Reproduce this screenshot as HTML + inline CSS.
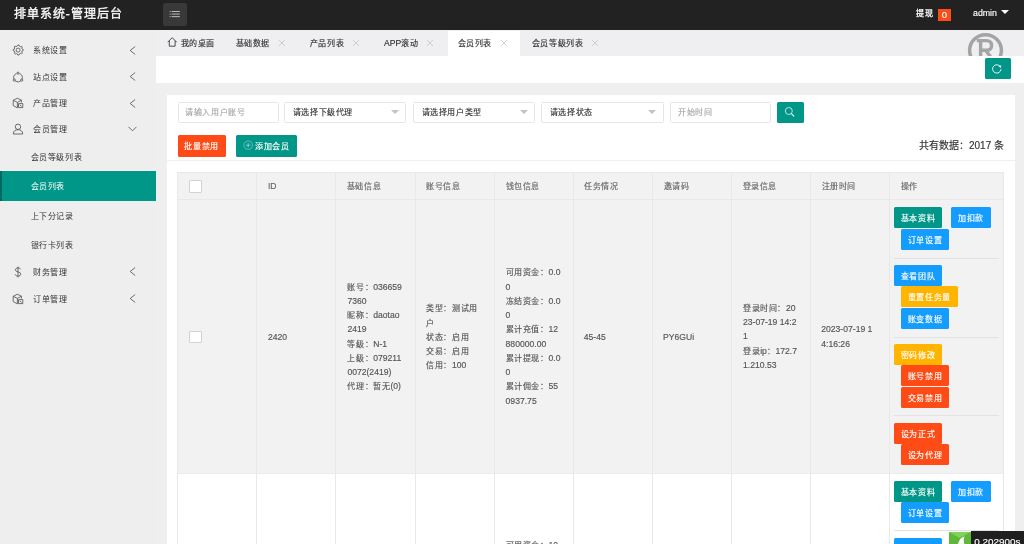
<!DOCTYPE html>
<html lang="zh-CN"><head><meta charset="utf-8"><style>
*{box-sizing:border-box;margin:0;padding:0}
html,body{width:1024px;height:544px;overflow:hidden}
body{position:relative;background:#efefef;font-family:"Liberation Sans",sans-serif;font-size:9px;color:#666}
.t,.bt{-webkit-text-stroke-width:0.15px}
#wrap{position:absolute;left:0;top:0;width:1024px;height:544px;will-change:transform}
.a{position:absolute}
.t{position:absolute;white-space:nowrap;line-height:12px}
</style></head><body><div id="wrap">
<div class="a" style="left:0px;top:0px;width:1024.00px;height:30.00px;background:#222"></div>
<div class="t" style="left:13.6px;top:8.2px;color:#fff;-webkit-text-stroke-width:0.3px"><span style="font-size:12px;letter-spacing:0.98px">排单系统</span><span style="font-size:12.9px;letter-spacing:0.98px">-</span><span style="font-size:12px;letter-spacing:0.98px">管理后台</span></div>
<div class="a" style="left:163px;top:3px;width:23.50px;height:22.50px;background:#393939;border-radius:2.5px"></div>
<svg class="a" style="left:163px;top:3px" width="23.5" height="22.5" viewBox="0 0 23.5 22.5">
<g fill="#c8c8c8"><rect x="6.7" y="8" width="1" height="0.9"/><rect x="8.6" y="8" width="8.2" height="0.9"/>
<rect x="6.7" y="10.6" width="1" height="0.9"/><rect x="8.6" y="10.6" width="8.2" height="0.9"/>
<rect x="6.7" y="13.2" width="1" height="0.9"/><rect x="8.6" y="13.2" width="8.2" height="0.9"/></g></svg>
<div class="t" style="left:916px;top:7.20px;color:#fff;-webkit-text-stroke-width:0.25px"><span style="font-size:8.00px;letter-spacing:0.60px">提现</span></div>
<div class="a" style="left:938px;top:8.5px;width:13.00px;height:12.30px;background:#ff4c16"></div>
<div class="t" style="left:938px;top:9.00px;color:#fff;font-size:9.6px;letter-spacing:0px;width:13px;text-align:center">0</div>
<div class="t" style="left:973px;top:7.30px;color:#fff;font-size:8.8px;letter-spacing:0px;">admin</div>
<div class="a" style="left:1001px;top:10.3px;width:0;height:0;border-left:4.2px solid transparent;border-right:4.2px solid transparent;border-top:4px solid #fff"></div>
<div class="a" style="left:0px;top:30px;width:156.00px;height:514.00px;background:#eee"></div>
<div class="a" style="left:0px;top:171.25px;width:156.00px;height:29.75px;background:#009688;border-left:2.7px solid #00695f"></div>
<svg class="a" style="left:12px;top:44.3px" width="12" height="12" viewBox="0 0 12 12" fill="none" stroke="#555" stroke-width="0.85"><path d="M6 0.9 L7 1.1 L7.4 2.2 L8.5 2.7 L9.6 2.2 L10.3 3 L9.8 4.1 L10.2 5.2 L11.2 5.6 L11.2 6.6 L10.2 7 L9.8 8.1 L10.3 9.1 L9.5 9.9 L8.5 9.4 L7.4 9.9 L7 11 L5.9 11.1 L5.4 10 L4.3 9.6 L3.2 10.1 L2.4 9.3 L2.9 8.2 L2.4 7.1 L1.2 6.7 L1.1 5.6 L2.3 5.1 L2.7 4 L2.2 2.9 L3 2.1 L4.1 2.6 L5.2 2.1 Z"/><circle cx="6.1" cy="6.1" r="2"/></svg>
<div class="t" style="left:33px;top:44.40px;color:#333;-webkit-text-stroke-width:0"><span style="font-size:8.00px;letter-spacing:0.60px">系统设置</span></div>
<svg class="a" style="left:129px;top:45.8px" width="7" height="9" viewBox="0 0 7 9"><path d="M6.2 0.5 L1.2 4.5 L6.2 8.5" fill="none" stroke="#555" stroke-width="0.85"/></svg>
<svg class="a" style="left:12px;top:70.7px" width="12" height="12" viewBox="0 0 12 12" fill="none" stroke="#555" stroke-width="0.85"><path d="M4.3 2.6 A4.3 4.3 0 0 0 1.9 8.2"/><path d="M7.7 2.6 A4.3 4.3 0 0 1 10.1 8.2"/><path d="M3.2 9.9 A4.3 4.3 0 0 0 8.8 9.9"/><circle cx="6" cy="2.2" r="1.1"/><circle cx="2.3" cy="9.1" r="1.1"/><circle cx="9.7" cy="9.1" r="1.1"/></svg>
<div class="t" style="left:33px;top:70.80px;color:#333;-webkit-text-stroke-width:0"><span style="font-size:8.00px;letter-spacing:0.60px">站点设置</span></div>
<svg class="a" style="left:129px;top:72.2px" width="7" height="9" viewBox="0 0 7 9"><path d="M6.2 0.5 L1.2 4.5 L6.2 8.5" fill="none" stroke="#555" stroke-width="0.85"/></svg>
<svg class="a" style="left:12px;top:97px" width="12" height="12" viewBox="0 0 12 12" fill="none" stroke="#555" stroke-width="0.85"><path d="M1.2 3.3 L5.4 1.2 L9.4 3.2 L9.4 5.5 M1.2 3.3 L1.2 8.6 L5.4 10.8 L5.4 5.4 L1.2 3.3 M5.4 5.4 L9.4 3.2"/><path d="M6.5 6.6 L10.8 6.6 L10.8 10.6 L6.5 10.6 Z M7.7 7.8 L9.6 9.4"/></svg>
<div class="t" style="left:33px;top:97.10px;color:#333;-webkit-text-stroke-width:0"><span style="font-size:8.00px;letter-spacing:0.60px">产品管理</span></div>
<svg class="a" style="left:129px;top:98.5px" width="7" height="9" viewBox="0 0 7 9"><path d="M6.2 0.5 L1.2 4.5 L6.2 8.5" fill="none" stroke="#555" stroke-width="0.85"/></svg>
<svg class="a" style="left:12px;top:123.30000000000001px" width="12" height="12" viewBox="0 0 12 12" fill="none" stroke="#555" stroke-width="0.85"><circle cx="6" cy="3.8" r="2.7"/><path d="M1.3 11 C1.3 7.8 3.5 6.7 6 6.7 C8.5 6.7 10.7 7.8 10.7 11 Z"/></svg>
<div class="t" style="left:33px;top:123.40px;color:#333;-webkit-text-stroke-width:0"><span style="font-size:8.00px;letter-spacing:0.60px">会员管理</span></div>
<svg class="a" style="left:128px;top:126.30000000000001px" width="9" height="6" viewBox="0 0 9 6"><path d="M0.5 0.8 L4.5 4.8 L8.5 0.8" fill="none" stroke="#555" stroke-width="0.85"/></svg>
<svg class="a" style="left:12px;top:265.9px" width="12" height="12" viewBox="0 0 12 12" fill="none" stroke="#555" stroke-width="0.85"><path d="M8.6 3.3 C8.2 2.3 7.2 1.9 6 1.9 C4.5 1.9 3.4 2.7 3.4 3.9 C3.4 6.5 8.8 5.4 8.8 8.1 C8.8 9.4 7.6 10.1 6 10.1 C4.6 10.1 3.5 9.5 3.1 8.4 M6 0.6 L6 11.4"/></svg>
<div class="t" style="left:33px;top:266.00px;color:#333;-webkit-text-stroke-width:0"><span style="font-size:8.00px;letter-spacing:0.60px">财务管理</span></div>
<svg class="a" style="left:129px;top:267.4px" width="7" height="9" viewBox="0 0 7 9"><path d="M6.2 0.5 L1.2 4.5 L6.2 8.5" fill="none" stroke="#555" stroke-width="0.85"/></svg>
<svg class="a" style="left:12px;top:292.75px" width="12" height="12" viewBox="0 0 12 12" fill="none" stroke="#555" stroke-width="0.85"><path d="M1.2 3.3 L5.4 1.2 L9.4 3.2 L9.4 5.5 M1.2 3.3 L1.2 8.6 L5.4 10.8 L5.4 5.4 L1.2 3.3 M5.4 5.4 L9.4 3.2"/><path d="M6.5 6.6 L10.8 6.6 L10.8 10.6 L6.5 10.6 Z M7.7 7.8 L9.6 9.4"/></svg>
<div class="t" style="left:33px;top:292.85px;color:#333;-webkit-text-stroke-width:0"><span style="font-size:8.00px;letter-spacing:0.60px">订单管理</span></div>
<svg class="a" style="left:129px;top:294.25px" width="7" height="9" viewBox="0 0 7 9"><path d="M6.2 0.5 L1.2 4.5 L6.2 8.5" fill="none" stroke="#555" stroke-width="0.85"/></svg>
<div class="t" style="left:30.7px;top:151.30px;color:#333;-webkit-text-stroke-width:0"><span style="font-size:8.00px;letter-spacing:0.60px">会员等级列表</span></div>
<div class="t" style="left:30.7px;top:180.35px;color:#fff;-webkit-text-stroke-width:0"><span style="font-size:8.00px;letter-spacing:0.60px">会员列表</span></div>
<div class="t" style="left:30.7px;top:209.70px;color:#333;-webkit-text-stroke-width:0"><span style="font-size:8.00px;letter-spacing:0.60px">上下分记录</span></div>
<div class="t" style="left:30.7px;top:238.80px;color:#333;-webkit-text-stroke-width:0"><span style="font-size:8.00px;letter-spacing:0.60px">银行卡列表</span></div>
<div class="a" style="left:156px;top:30px;width:868.00px;height:26.00px;background:#efeef0"></div>
<div class="a" style="left:447.7px;top:31px;width:72.10px;height:25.00px;background:#fff"></div>
<svg class="a" style="left:966px;top:31px" width="40" height="40" viewBox="0 0 40 40">
<circle cx="19.5" cy="19.6" r="15.9" fill="none" stroke="#a4a4a4" stroke-width="3.5"/>
<g fill="none" stroke="#a4a4a4" stroke-width="3.4"><path d="M14.6 8.6 L14.6 32"/><path d="M10.8 9.6 L20.2 9.6 C24 9.6 25.6 11.8 25.6 14.4 C25.6 17.1 24 19.3 20.2 19.3 L14.6 19.3"/><path d="M19.6 19.3 L26.2 28"/></g></svg>
<svg class="a" style="left:166.5px;top:37px" width="11" height="10" viewBox="0 0 11 10"><path d="M0.7 5.2 L5.2 0.7 L9.7 5.2 M2.3 3.8 L2.3 9.2 L8.1 9.2 L8.1 3.8" fill="none" stroke="#333" stroke-width="0.85"/></svg>
<div class="t" style="left:180.6px;top:36.50px;color:#333;"><span style="font-size:8.00px;letter-spacing:0.60px">我的桌面</span></div>
<div class="t" style="left:235.5px;top:36.50px;color:#333;"><span style="font-size:8.00px;letter-spacing:0.60px">基础数据</span></div>
<svg class="a" style="left:278.1px;top:38.5px" width="8" height="8" viewBox="0 0 8 8"><path d="M0.9 0.9 L7 7 M7 0.9 L0.9 7" stroke="#c4c4c4" stroke-width="0.8"/></svg>
<div class="t" style="left:309.9px;top:36.50px;color:#333;"><span style="font-size:8.00px;letter-spacing:0.60px">产品列表</span></div>
<svg class="a" style="left:352.3px;top:38.5px" width="8" height="8" viewBox="0 0 8 8"><path d="M0.9 0.9 L7 7 M7 0.9 L0.9 7" stroke="#c4c4c4" stroke-width="0.8"/></svg>
<div class="t" style="left:384px;top:36.50px;color:#333;"><span style="font-size:8.60px">APP</span><span style="font-size:8.00px;letter-spacing:0.60px">滚动</span></div>
<svg class="a" style="left:425.9px;top:38.5px" width="8" height="8" viewBox="0 0 8 8"><path d="M0.9 0.9 L7 7 M7 0.9 L0.9 7" stroke="#c4c4c4" stroke-width="0.8"/></svg>
<div class="t" style="left:457.6px;top:36.50px;color:#333;"><span style="font-size:8.00px;letter-spacing:0.60px">会员列表</span></div>
<svg class="a" style="left:499.8px;top:38.5px" width="8" height="8" viewBox="0 0 8 8"><path d="M0.9 0.9 L7 7 M7 0.9 L0.9 7" stroke="#c4c4c4" stroke-width="0.8"/></svg>
<div class="t" style="left:531.8px;top:36.50px;color:#333;"><span style="font-size:8.00px;letter-spacing:0.60px">会员等级列表</span></div>
<svg class="a" style="left:591.2px;top:38.5px" width="8" height="8" viewBox="0 0 8 8"><path d="M0.9 0.9 L7 7 M7 0.9 L0.9 7" stroke="#c4c4c4" stroke-width="0.8"/></svg>
<div class="a" style="left:156px;top:55.5px;width:868.00px;height:27.50px;background:#fff"></div>
<div class="a" style="left:985px;top:58px;width:26.00px;height:20.70px;background:#009688;border-radius:1.5px"></div>
<svg class="a" style="left:991px;top:62.5px" width="12" height="12" viewBox="0 0 12 12"><path d="M9.6 4.1 A4.2 4.2 0 1 0 10 6.2" fill="none" stroke="#fff" stroke-width="0.9"/><path d="M7.6 3.3 L10.2 2.3 L10 5.1 Z" fill="#fff"/></svg>
<div class="a" style="left:167px;top:95px;width:848.00px;height:449.00px;background:#fff"></div>
<div class="a" style="left:177.5px;top:102.4px;width:101.00px;height:20.20px;border:0.75px solid #e6e6e6;border-radius:1.5px;background:#fff"></div>
<div class="t" style="left:185.2px;top:106.00px;color:#a8a8a8;"><span style="font-size:8.00px;letter-spacing:0.60px">请输入用户账号</span></div>
<div class="a" style="left:284.3px;top:102.4px;width:122.20px;height:20.20px;border:0.75px solid #e6e6e6;border-radius:1.5px;background:#fff"></div>
<div class="t" style="left:292.8px;top:106.20px;color:#333;"><span style="font-size:8.00px;letter-spacing:0.60px">请选择下级代理</span></div>
<div class="a" style="left:391.20px;top:110.3px;width:0;height:0;border-left:4.2px solid transparent;border-right:4.2px solid transparent;border-top:4px solid #c2c2c2"></div>
<div class="a" style="left:413.2px;top:102.4px;width:122.10px;height:20.20px;border:0.75px solid #e6e6e6;border-radius:1.5px;background:#fff"></div>
<div class="t" style="left:421.7px;top:106.20px;color:#333;"><span style="font-size:8.00px;letter-spacing:0.60px">请选择用户类型</span></div>
<div class="a" style="left:520.00px;top:110.3px;width:0;height:0;border-left:4.2px solid transparent;border-right:4.2px solid transparent;border-top:4px solid #c2c2c2"></div>
<div class="a" style="left:541.4px;top:102.4px;width:122.30px;height:20.20px;border:0.75px solid #e6e6e6;border-radius:1.5px;background:#fff"></div>
<div class="t" style="left:549.9px;top:106.20px;color:#333;"><span style="font-size:8.00px;letter-spacing:0.60px">请选择状态</span></div>
<div class="a" style="left:648.40px;top:110.3px;width:0;height:0;border-left:4.2px solid transparent;border-right:4.2px solid transparent;border-top:4px solid #c2c2c2"></div>
<div class="a" style="left:670.2px;top:102.4px;width:100.80px;height:20.20px;border:0.75px solid #e6e6e6;border-radius:1.5px;background:#fff"></div>
<div class="t" style="left:678.3px;top:106.00px;color:#a8a8a8;"><span style="font-size:8.00px;letter-spacing:0.60px">开始时间</span></div>
<div class="a" style="left:777.3px;top:102px;width:26.50px;height:21.10px;background:#009688;border-radius:1.5px"></div>
<svg class="a" style="left:784px;top:106px" width="12" height="12" viewBox="0 0 12 12"><circle cx="4.8" cy="5" r="3.5" fill="none" stroke="rgba(255,255,255,0.85)" stroke-width="0.85"/><path d="M7.4 7.6 L9.8 10" stroke="rgba(255,255,255,0.85)" stroke-width="1.2" stroke-linecap="round"/></svg>
<div class="a bt" style="left:177.5px;top:135.1px;width:48.30px;height:21.60px;background:#ff4c16;border-radius:1.5px;color:#fff;text-align:center;line-height:22.60px;white-space:nowrap"><span style="font-size:8.00px;letter-spacing:0.60px">批量禁用</span></div>
<div class="a" style="left:236px;top:135.1px;width:60.50px;height:21.60px;background:#009688;border-radius:1.5px"></div>
<svg class="a" style="left:242.5px;top:140.4px" width="10.4" height="10.4" viewBox="0 0 10.4 10.4"><circle cx="5.2" cy="5.2" r="4.3" fill="none" stroke="rgba(255,255,255,0.6)" stroke-width="0.6"/><path d="M2.9 5.2 L7.5 5.2 M5.2 2.9 L5.2 7.5" stroke="rgba(255,255,255,0.8)" stroke-width="0.6"/></svg>
<div class="t" style="left:255px;top:140.40px;color:#fff;"><span style="font-size:8.00px;letter-spacing:0.60px">添加会员</span></div>
<div class="t" style="left:900px;top:140.00px;color:#333;font-size:10px;letter-spacing:0px;width:104px;text-align:right">共有数据：2017 条</div>
<div class="a" style="left:167px;top:159.8px;width:848.00px;height:0.70px;background:#f0f0f0"></div>
<div class="a" style="left:177px;top:171.6px;width:826.50px;height:28.00px;background:#f2f2f2"></div>
<div class="a" style="left:177px;top:199.6px;width:826.50px;height:274.10px;background:#f2f2f2"></div>
<div class="a" style="left:177px;top:473.7px;width:826.50px;height:70.30px;background:#fff"></div>
<div class="a" style="left:177px;top:171.6px;width:826.50px;height:0.70px;background:#e8e8e8"></div>
<div class="a" style="left:177px;top:198.9px;width:826.50px;height:0.70px;background:#e8e8e8"></div>
<div class="a" style="left:177px;top:473.0px;width:826.50px;height:0.70px;background:#ececec"></div>
<div class="a" style="left:176.65px;top:171.6px;width:0.70px;height:372.40px;background:#e8e8e8"></div>
<div class="a" style="left:256.15px;top:171.6px;width:0.70px;height:372.40px;background:#e8e8e8"></div>
<div class="a" style="left:335.45px;top:171.6px;width:0.70px;height:372.40px;background:#e8e8e8"></div>
<div class="a" style="left:414.95px;top:171.6px;width:0.70px;height:372.40px;background:#e8e8e8"></div>
<div class="a" style="left:494.34999999999997px;top:171.6px;width:0.70px;height:372.40px;background:#e8e8e8"></div>
<div class="a" style="left:573.15px;top:171.6px;width:0.70px;height:372.40px;background:#e8e8e8"></div>
<div class="a" style="left:652.05px;top:171.6px;width:0.70px;height:372.40px;background:#e8e8e8"></div>
<div class="a" style="left:730.9499999999999px;top:171.6px;width:0.70px;height:372.40px;background:#e8e8e8"></div>
<div class="a" style="left:809.9499999999999px;top:171.6px;width:0.70px;height:372.40px;background:#e8e8e8"></div>
<div class="a" style="left:889.05px;top:171.6px;width:0.70px;height:372.40px;background:#e8e8e8"></div>
<div class="a" style="left:1003.15px;top:171.6px;width:0.70px;height:372.40px;background:#e8e8e8"></div>
<div class="a" style="left:189.1px;top:180.2px;width:12.50px;height:12.40px;background:#fff;border:0.75px solid #d2d2d2;border-radius:1px"></div>
<div class="t" style="left:267.9px;top:179.90px;color:#666;"><span style="font-size:8.60px">ID</span></div>
<div class="t" style="left:346.8px;top:179.90px;color:#666;"><span style="font-size:8.00px;letter-spacing:0.60px">基础信息</span></div>
<div class="t" style="left:426.2px;top:179.90px;color:#666;"><span style="font-size:8.00px;letter-spacing:0.60px">账号信息</span></div>
<div class="t" style="left:505.6px;top:179.90px;color:#666;"><span style="font-size:8.00px;letter-spacing:0.60px">钱包信息</span></div>
<div class="t" style="left:584.3px;top:179.90px;color:#666;"><span style="font-size:8.00px;letter-spacing:0.60px">任务情况</span></div>
<div class="t" style="left:663.7px;top:179.90px;color:#666;"><span style="font-size:8.00px;letter-spacing:0.60px">邀请码</span></div>
<div class="t" style="left:742.6px;top:179.90px;color:#666;"><span style="font-size:8.00px;letter-spacing:0.60px">登录信息</span></div>
<div class="t" style="left:821.5px;top:179.90px;color:#666;"><span style="font-size:8.00px;letter-spacing:0.60px">注册时间</span></div>
<div class="t" style="left:900.9px;top:179.90px;color:#666;"><span style="font-size:8.00px;letter-spacing:0.60px">操作</span></div>
<div class="a" style="left:189.1px;top:330.5px;width:12.50px;height:12.40px;background:#fff;border:0.75px solid #d2d2d2;border-radius:1px"></div>
<div class="t" style="left:268px;top:330.90px;color:#555;"><span style="font-size:8.60px">2420</span></div>
<div class="t" style="left:347.4px;top:280.70px;color:#555;"><span style="font-size:8.00px;letter-spacing:0.60px">账号：</span><span style="font-size:8.60px">036659</span></div>
<div class="t" style="left:347.4px;top:294.95px;color:#555;"><span style="font-size:8.60px">7360</span></div>
<div class="t" style="left:347.4px;top:309.20px;color:#555;"><span style="font-size:8.00px;letter-spacing:0.60px">昵称：</span><span style="font-size:8.60px">daotao</span></div>
<div class="t" style="left:347.4px;top:323.45px;color:#555;"><span style="font-size:8.60px">2419</span></div>
<div class="t" style="left:347.4px;top:337.70px;color:#555;"><span style="font-size:8.00px;letter-spacing:0.60px">等级：</span><span style="font-size:8.60px">N-1</span></div>
<div class="t" style="left:347.4px;top:351.95px;color:#555;"><span style="font-size:8.00px;letter-spacing:0.60px">上级：</span><span style="font-size:8.60px">079211</span></div>
<div class="t" style="left:347.4px;top:366.20px;color:#555;"><span style="font-size:8.60px">0072(2419)</span></div>
<div class="t" style="left:347.4px;top:380.45px;color:#555;"><span style="font-size:8.00px;letter-spacing:0.60px">代理：暂无</span><span style="font-size:8.60px">(0)</span></div>
<div class="t" style="left:426.2px;top:302.30px;color:#555;"><span style="font-size:8.00px;letter-spacing:0.60px">类型：测试用</span></div>
<div class="t" style="left:426.2px;top:316.55px;color:#555;"><span style="font-size:8.00px;letter-spacing:0.60px">户</span></div>
<div class="t" style="left:426.2px;top:330.80px;color:#555;"><span style="font-size:8.00px;letter-spacing:0.60px">状态：启用</span></div>
<div class="t" style="left:426.2px;top:345.05px;color:#555;"><span style="font-size:8.00px;letter-spacing:0.60px">交易：启用</span></div>
<div class="t" style="left:426.2px;top:359.30px;color:#555;"><span style="font-size:8.00px;letter-spacing:0.60px">信用：</span><span style="font-size:8.60px">100</span></div>
<div class="t" style="left:505.6px;top:266.30px;color:#555;"><span style="font-size:8.00px;letter-spacing:0.60px">可用资金：</span><span style="font-size:8.60px">0.0</span></div>
<div class="t" style="left:505.6px;top:280.55px;color:#555;"><span style="font-size:8.60px">0</span></div>
<div class="t" style="left:505.6px;top:294.80px;color:#555;"><span style="font-size:8.00px;letter-spacing:0.60px">冻结资金：</span><span style="font-size:8.60px">0.0</span></div>
<div class="t" style="left:505.6px;top:309.05px;color:#555;"><span style="font-size:8.60px">0</span></div>
<div class="t" style="left:505.6px;top:323.30px;color:#555;"><span style="font-size:8.00px;letter-spacing:0.60px">累计充值：</span><span style="font-size:8.60px">12</span></div>
<div class="t" style="left:505.6px;top:337.55px;color:#555;"><span style="font-size:8.60px">880000.00</span></div>
<div class="t" style="left:505.6px;top:351.80px;color:#555;"><span style="font-size:8.00px;letter-spacing:0.60px">累计提现：</span><span style="font-size:8.60px">0.0</span></div>
<div class="t" style="left:505.6px;top:366.05px;color:#555;"><span style="font-size:8.60px">0</span></div>
<div class="t" style="left:505.6px;top:380.30px;color:#555;"><span style="font-size:8.00px;letter-spacing:0.60px">累计佣金：</span><span style="font-size:8.60px">55</span></div>
<div class="t" style="left:505.6px;top:394.55px;color:#555;"><span style="font-size:8.60px">0937.75</span></div>
<div class="t" style="left:583.75px;top:330.70px;color:#555;"><span style="font-size:8.60px">45-45</span></div>
<div class="t" style="left:663px;top:330.70px;color:#555;"><span style="font-size:8.60px">PY6GUi</span></div>
<div class="t" style="left:743px;top:301.80px;color:#555;"><span style="font-size:8.00px;letter-spacing:0.60px">登录时间：</span><span style="font-size:8.60px">20</span></div>
<div class="t" style="left:743px;top:316.05px;color:#555;"><span style="font-size:8.60px">23-07-19 14:2</span></div>
<div class="t" style="left:743px;top:330.30px;color:#555;"><span style="font-size:8.60px">1</span></div>
<div class="t" style="left:743px;top:344.55px;color:#555;"><span style="font-size:8.00px;letter-spacing:0.60px">登录</span><span style="font-size:8.60px">ip</span><span style="font-size:8.00px;letter-spacing:0.60px">：</span><span style="font-size:8.60px">172.7</span></div>
<div class="t" style="left:743px;top:358.80px;color:#555;"><span style="font-size:8.60px">1.210.53</span></div>
<div class="t" style="left:821.25px;top:323.30px;color:#555;"><span style="font-size:8.60px">2023-07-19 1</span></div>
<div class="t" style="left:821.25px;top:337.55px;color:#555;"><span style="font-size:8.60px">4:16:26</span></div>
<div class="a bt" style="left:893.8px;top:207.3px;width:48.30px;height:21.00px;background:#009688;border-radius:1.5px;color:#fff;text-align:center;line-height:22.00px;white-space:nowrap"><span style="font-size:8.00px;letter-spacing:0.60px">基本资料</span></div>
<div class="a bt" style="left:951.2px;top:207.3px;width:40.00px;height:21.00px;background:#149dff;border-radius:1.5px;color:#fff;text-align:center;line-height:22.00px;white-space:nowrap"><span style="font-size:8.00px;letter-spacing:0.60px">加扣款</span></div>
<div class="a bt" style="left:901px;top:228.55px;width:48.00px;height:21.00px;background:#149dff;border-radius:1.5px;color:#fff;text-align:center;line-height:22.00px;white-space:nowrap"><span style="font-size:8.00px;letter-spacing:0.60px">订单设置</span></div>
<div class="a" style="left:893.8px;top:257.6px;width:105.70px;height:0.70px;background:#e2e2e2"></div>
<div class="a bt" style="left:893.8px;top:265.2px;width:48.30px;height:21.00px;background:#149dff;border-radius:1.5px;color:#fff;text-align:center;line-height:22.00px;white-space:nowrap"><span style="font-size:8.00px;letter-spacing:0.60px">查看团队</span></div>
<div class="a bt" style="left:901px;top:286.45px;width:56.60px;height:21.00px;background:#ffb500;border-radius:1.5px;color:#fff;text-align:center;line-height:22.00px;white-space:nowrap"><span style="font-size:8.00px;letter-spacing:0.60px">重置任务量</span></div>
<div class="a bt" style="left:901px;top:307.7px;width:48.00px;height:21.00px;background:#149dff;border-radius:1.5px;color:#fff;text-align:center;line-height:22.00px;white-space:nowrap"><span style="font-size:8.00px;letter-spacing:0.60px">账变数据</span></div>
<div class="a" style="left:893.8px;top:336.7px;width:105.70px;height:0.70px;background:#e2e2e2"></div>
<div class="a bt" style="left:893.8px;top:344.1px;width:48.30px;height:21.00px;background:#ffb500;border-radius:1.5px;color:#fff;text-align:center;line-height:22.00px;white-space:nowrap"><span style="font-size:8.00px;letter-spacing:0.60px">密码修改</span></div>
<div class="a bt" style="left:901px;top:365.35px;width:48.00px;height:21.00px;background:#ff4c16;border-radius:1.5px;color:#fff;text-align:center;line-height:22.00px;white-space:nowrap"><span style="font-size:8.00px;letter-spacing:0.60px">账号禁用</span></div>
<div class="a bt" style="left:901px;top:386.6px;width:48.00px;height:21.00px;background:#ff4c16;border-radius:1.5px;color:#fff;text-align:center;line-height:22.00px;white-space:nowrap"><span style="font-size:8.00px;letter-spacing:0.60px">交易禁用</span></div>
<div class="a" style="left:893.8px;top:415px;width:105.70px;height:0.70px;background:#e2e2e2"></div>
<div class="a bt" style="left:893.8px;top:423.2px;width:48.30px;height:21.00px;background:#ff4c16;border-radius:1.5px;color:#fff;text-align:center;line-height:22.00px;white-space:nowrap"><span style="font-size:8.00px;letter-spacing:0.60px">设为正式</span></div>
<div class="a bt" style="left:901px;top:444.45px;width:48.00px;height:21.00px;background:#ff4c16;border-radius:1.5px;color:#fff;text-align:center;line-height:22.00px;white-space:nowrap"><span style="font-size:8.00px;letter-spacing:0.60px">设为代理</span></div>
<div class="a bt" style="left:893.8px;top:480.5px;width:48.30px;height:21.00px;background:#009688;border-radius:1.5px;color:#fff;text-align:center;line-height:22.00px;white-space:nowrap"><span style="font-size:8.00px;letter-spacing:0.60px">基本资料</span></div>
<div class="a bt" style="left:951.2px;top:480.5px;width:40.00px;height:21.00px;background:#149dff;border-radius:1.5px;color:#fff;text-align:center;line-height:22.00px;white-space:nowrap"><span style="font-size:8.00px;letter-spacing:0.60px">加扣款</span></div>
<div class="a bt" style="left:901px;top:501.75px;width:48.00px;height:21.00px;background:#149dff;border-radius:1.5px;color:#fff;text-align:center;line-height:22.00px;white-space:nowrap"><span style="font-size:8.00px;letter-spacing:0.60px">订单设置</span></div>
<div class="a" style="left:893.8px;top:530.2px;width:105.70px;height:0.70px;background:#e2e2e2"></div>
<div class="a bt" style="left:893.8px;top:538.2px;width:48.30px;height:21.00px;background:#149dff;border-radius:1.5px;color:#fff;text-align:center;line-height:22.00px;white-space:nowrap"></div>
<div class="t" style="left:505.6px;top:539.30px;color:#555;"><span style="font-size:8.00px;letter-spacing:0.60px">可用资金：</span><span style="font-size:8.60px">10</span></div>
<div class="a" style="left:970.7px;top:530.9px;width:53.30px;height:13.10px;background:#1f1f1f"></div>
<div class="a" style="left:949.2px;top:531.9px;width:21.50px;height:12.10px;background:#5fb83a"></div>
<svg class="a" style="left:949.2px;top:531.9px" width="21.5" height="12.1" viewBox="0 0 21.5 12.1"><path d="M0 0 L21.5 0 L10.7 6 Z" fill="#7fd35a"/><path d="M9 12.1 C10 8 12 5.5 15.5 4.5 C14.5 7 14.6 9.5 15.4 12.1 Z" fill="#fff"/></svg>
<div class="t" style="left:974.3px;top:535.80px;color:#fff;font-size:9.9px;letter-spacing:0px;">0.202900s</div>
</div></body></html>
